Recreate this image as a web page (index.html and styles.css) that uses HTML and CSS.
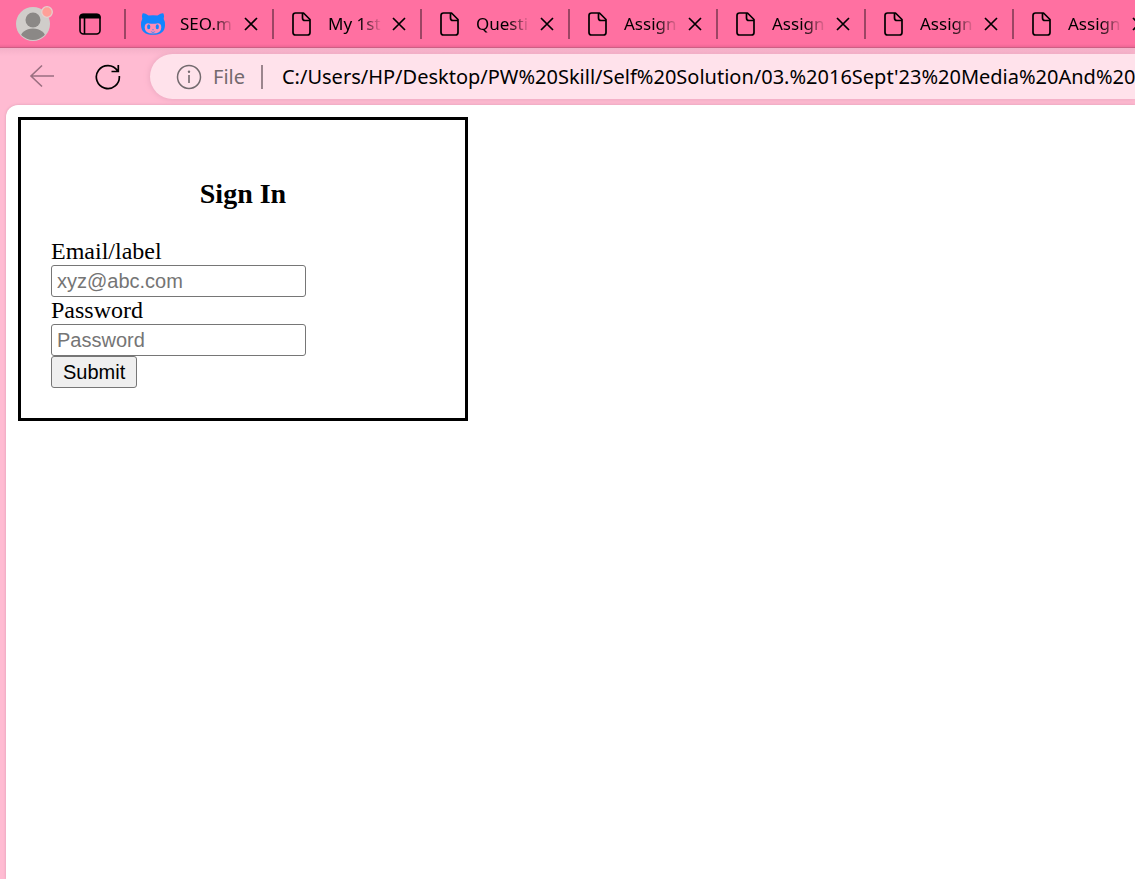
FILE: index.html
```html
<!DOCTYPE html>
<html lang="en">
<head>
<meta charset="utf-8">
<meta name="viewport" content="width=device-width, initial-scale=1">
<title>Sign In</title>
<link rel="stylesheet" href="styles.css">
</head>
<body>
<svg class="defs" aria-hidden="true">
  <symbol id="file" viewBox="0 0 24 24"><path d="M6.500 1H14.500L21 7.500V20.500Q21 23 18.500 23H6.500Q4 23 4 20.500V3.500Q4 1 6.500 1ZM13.500 1V6Q13.500 8.500 16 8.500H21" fill="none" stroke="currentColor" stroke-width="1.700" stroke-linejoin="round"/></symbol>
  <symbol id="close" viewBox="0 0 14 14"><path d="M1 1L13 13M13 1L1 13" fill="none" stroke="currentColor" stroke-width="1.700"/></symbol>
</svg>
<header class="chrome">
  <div class="tabstrip">
    <button class="plain profile" aria-label="Profile">
      <svg width="40" height="40" viewBox="0 0 40 40">
        <defs><clipPath id="disc"><circle cx="20" cy="20" r="16"/></clipPath></defs>
        <circle cx="20" cy="20" r="17" fill="#d0cdca"/>
        <g fill="#8b8886" clip-path="url(#disc)"><circle cx="20" cy="16" r="7.500"/><ellipse cx="20" cy="35" rx="13" ry="10.500"/></g>
        <circle cx="34" cy="8" r="5.300" fill="#ff9f98" stroke="#e5d0ce" stroke-width="1.300"/>
      </svg>
    </button>
    <button class="plain actions" aria-label="Tab actions">
      <svg width="24" height="24" viewBox="0 0 24 24"><rect x="2" y="2.500" width="20" height="19.500" rx="3.500" fill="none" stroke="#000" stroke-width="1.600"/><path d="M1.300 6.500V5Q1.300 1.500 5 1.500H19Q22.700 1.500 22.700 5V6.500Z"/><path d="M6.500 6V22" stroke="#000" stroke-width="1.600"/></svg>
    </button>
    <nav class="tabs" aria-label="Open tabs">
      <div class="tab">
        <svg class="favicon" viewBox="0 0 24 24"><path fill="#1384ff" d="M1.500 1.500Q3 .3 7.500 3.600Q12 2.700 16.500 3.600Q21 .3 22.500 1.500Q23.600 4 22.700 7Q24 9 24 13Q24 22.800 12 22.800Q0 22.800 0 13Q0 9 1.300 7Q.4 4 1.500 1.500Z"/><path fill="#ff8db4" d="M8 11.400Q12 12 16 11.400Q20.300 11 20.300 15.500Q20.300 21.500 12 21.500T3.700 15.500Q3.700 11 8 11.400Z"/><g fill="#1384ff"><ellipse cx="7.700" cy="14.700" rx="1.600" ry="2.500"/><ellipse cx="16.300" cy="14.700" rx="1.600" ry="2.500"/><path d="M11 17.500H13L12 18.500ZM9.700 19Q12 21 14.300 19L13.700 20Q12 21.300 10.300 20Z"/></g></svg>
        <a class="title" href="#">SEO.m</a><button class="plain close" aria-label="Close"><svg><use href="#close"/></svg></button>
      </div>
      <div class="tab"><svg class="favicon"><use href="#file"/></svg><a class="title" href="#">My 1st</a><button class="plain close" aria-label="Close"><svg><use href="#close"/></svg></button></div>
      <div class="tab"><svg class="favicon"><use href="#file"/></svg><a class="title" href="#">Questi</a><button class="plain close" aria-label="Close"><svg><use href="#close"/></svg></button></div>
      <div class="tab"><svg class="favicon"><use href="#file"/></svg><a class="title" href="#">Assign</a><button class="plain close" aria-label="Close"><svg><use href="#close"/></svg></button></div>
      <div class="tab"><svg class="favicon"><use href="#file"/></svg><a class="title" href="#">Assign</a><button class="plain close" aria-label="Close"><svg><use href="#close"/></svg></button></div>
      <div class="tab"><svg class="favicon"><use href="#file"/></svg><a class="title" href="#">Assign</a><button class="plain close" aria-label="Close"><svg><use href="#close"/></svg></button></div>
      <div class="tab"><svg class="favicon"><use href="#file"/></svg><a class="title" href="#">Assign</a><button class="plain close" aria-label="Close"><svg><use href="#close"/></svg></button></div>
    </nav>
  </div>
  <div class="toolbar">
    <button class="plain back" aria-label="Back"><svg width="26" height="26" viewBox="0 0 26 26"><path d="M25 12H2M13 1.500L2 12L13 22.500" fill="none" stroke="#9b6f81" stroke-width="1.600"/></svg></button>
    <button class="plain reload" aria-label="Reload"><svg width="26" height="26" viewBox="0 0 26 26"><path d="M24.300 12A11.500 11.500 0 1 1 22.500 6.800M23.300 1V7.500H16.500" fill="none" stroke="#000" stroke-width="1.700"/></svg></button>
    <div class="address">
      <svg class="info" viewBox="0 0 26 26"><circle cx="13" cy="13" r="11.500" fill="none" stroke="#736a6e" stroke-width="1.500"/><path d="M13 11V19" stroke="#736a6e" stroke-width="1.600"/><circle cx="13" cy="7.800" r="1.200" fill="#736a6e"/></svg>
      <span class="scheme">File</span>
      <span class="url">C:/Users/HP/Desktop/PW%20Skill/Self%20Solution/03.%2016Sept'23%20Media%20And%20</span>
    </div>
  </div>
</header>
<main class="page">
  <form class="signin">
    <h3>Sign In</h3>
    <label for="email">Email/label</label>
    <input id="email" type="email" placeholder="xyz@abc.com">
    <label for="password">Password</label>
    <input id="password" type="password" placeholder="Password">
    <button class="submit" type="submit">Submit</button>
  </form>
</main>
</body>
</html>
```
FILE: styles.css
```css
* { box-sizing: border-box; }

body {
  display: flex;
  flex-direction: column;
  min-height: 100vh;
  margin: 0;
  background: #ffbbd2;
  font-family: "Noto Sans", "Open Sans", sans-serif;
  overflow-x: hidden;
}

.defs { display: none; }
svg { display: block; flex: none; }

.plain {
  display: block;
  flex: none;
  padding: 0;
  border: 0;
  background: none;
  color: #000;
}

.chrome { overflow: hidden; }

.tabstrip {
  display: flex;
  align-items: center;
  height: 48px;
  padding-left: 13px;
  background: linear-gradient(#ff70a1 44px, #ed6695);
  border-bottom: 1px solid #ce5d84;
}

.actions { margin: 0 22px 0 25px; }
.tabs { display: flex; }

.tab {
  display: flex;
  flex: none;
  align-items: center;
  width: 148px;
  height: 30px;
  padding-left: 15px;
  border-left: 2px solid #9c4564;
}

.favicon {
  width: 24px;
  height: 24px;
  margin-right: 15px;
}

.title {
  width: 54px;
  margin-right: 10px;
  overflow: hidden;
  color: #000;
  font-size: 17px;
  line-height: 28px;
  white-space: nowrap;
  text-decoration: none;
  -webkit-mask-image: linear-gradient(90deg, #000 60%, transparent);
  mask-image: linear-gradient(90deg, #000 60%, transparent);
}

.close svg { width: 14px; height: 14px; }

.toolbar {
  display: flex;
  align-items: center;
  height: 57px;
  padding-left: 29px;
  background: linear-gradient(#f4b0c8, #ffbbd2 8px);
}

.reload { margin: 0 29px 0 40px; }

.address {
  display: flex;
  flex: 1;
  align-items: center;
  min-width: 0;
  height: 45px;
  padding-left: 26px;
  border-radius: 23px 0 0 23px;
  background: #ffe2eb;
  box-shadow: 0 0 6px #e6a4bc;
  font-size: 20px;
  line-height: 24px;
  white-space: nowrap;
  overflow: hidden;
}

.info { width: 26px; height: 26px; }

.scheme {
  margin-left: 11px;
  padding-right: 16px;
  border-right: 2px solid #9b858d;
  color: #736a6e;
}

.url { margin-left: 19px; color: #000; }

.page {
  flex: 1;
  margin-left: 6px;
  padding: 12px;
  border-radius: 12px 0 0 0;
  background: #fff;
  box-shadow: 0 0 3px #dc9bb2;
}

.signin {
  display: flex;
  flex-direction: column;
  align-items: flex-start;
  width: 450px;
  max-width: 100%;
  padding: 30px;
  border: 3px solid #000;
  font: 24px/27px "Liberation Serif", serif;
}

.signin h3 {
  align-self: center;
  margin: 28px 0;
  font-size: 28px;
  line-height: 32px;
}

.signin input,
.submit {
  height: 32px;
  border: 1px solid #767676;
  border-radius: 3px;
  font: 20px "Liberation Sans", sans-serif;
}

.signin input {
  width: 255px;
  max-width: 100%;
  padding: 2px 5px;
  background: #fff;
}

.signin input::placeholder { color: #757575; }

.submit {
  padding: 0 11px;
  background: #efefef;
  color: #000;
}
```
